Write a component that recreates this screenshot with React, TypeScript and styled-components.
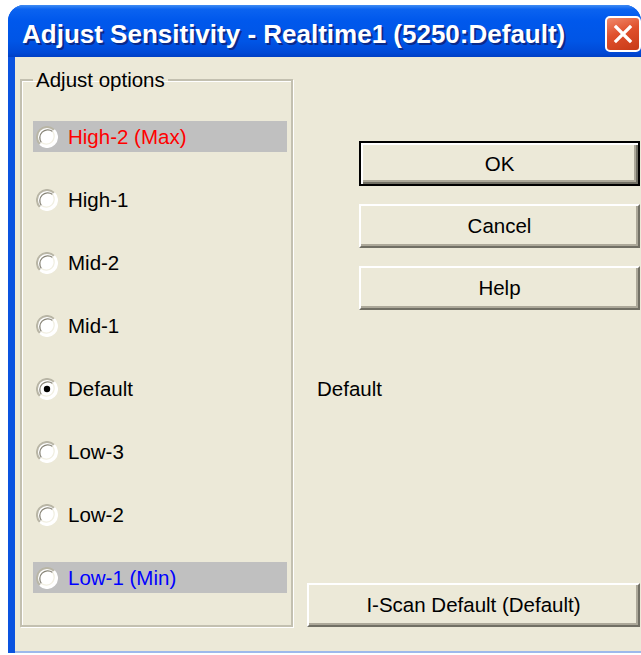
import * as React from 'react'
import styled, { createGlobalStyle } from 'styled-components'

const GlobalStyle = createGlobalStyle`
  html, body {
    margin: 0;
    padding: 0;
    background: #ffffff;
    overflow: hidden;
  }
  body {
    font-family: 'Liberation Sans', Arial, sans-serif;
  }
`

const Window = styled.div`
  margin: 5px 0 0 8px;
  width: 633px;
  border-radius: 16px 16px 0 0;
  background: #0a53e0;
  overflow: hidden;
`

const TitleBar = styled.div`
  height: 52px;
  display: flex;
  align-items: center;
  padding: 6px 0 0 14px;
  box-sizing: border-box;
  background: linear-gradient(
    180deg,
    #3f8cf3 0%,
    #0b63f0 8%,
    #0058ec 30%,
    #0055e6 70%,
    #0049d6 92%,
    #003fc4 100%
  );
`

const Title = styled.div`
  flex: 1;
  color: #ffffff;
  font-size: 26px;
  font-weight: bold;
  text-shadow: 2px 2px 0 #0b2a8a;
  white-space: nowrap;
  overflow: hidden;
`

const CloseButton = styled.div`
  flex: none;
  width: 36px;
  height: 36px;
  box-sizing: border-box;
  border: 2px solid #ffffff;
  border-radius: 5px;
  background: linear-gradient(160deg, #f08a6c 0%, #e0502c 45%, #c73a17 100%);
  display: flex;
  align-items: center;
  justify-content: center;
`

const Body = styled.div`
  margin-left: 7px;
  height: 596px;
  background: #ece9d8;
  display: flex;
  gap: 14px;
  padding: 11px 0 0 5px;
  box-sizing: border-box;
  border-bottom: 2px solid #9db9eb;
`

const GroupBox = styled.fieldset`
  margin: 0;
  width: 273px;
  height: 559px;
  box-sizing: border-box;
  padding: 29px 4px 31px 11px;
  border: 2px solid #c3c0b0;
  box-shadow: inset 1px 1px 0 #ffffff, 1px 1px 0 #ffffff;
  display: flex;
  flex-direction: column;
  gap: 32px;
`

const Legend = styled.legend`
  padding: 0 3px;
  font-size: 20.5px;
  line-height: 24px;
  color: #000000;
`

const OptionRow = styled.div<{ $highlight?: boolean; $color?: string }>`
  height: 31px;
  display: flex;
  align-items: center;
  gap: 10px;
  padding-left: 3px;
  background: ${(p) => (p.$highlight ? '#c0c0c0' : 'transparent')};
  color: ${(p) => p.$color || '#000000'};
  font-size: 20.5px;
`

const RightColumn = styled.div`
  width: 333px;
  height: 559px;
  display: flex;
  flex-direction: column;
  align-items: flex-end;
  padding-top: 73px;
  box-sizing: border-box;
`

const PushButton = styled.div<{ $default?: boolean; $width: number }>`
  width: ${(p) => p.$width}px;
  height: ${(p) => (p.$default ? 45 : 44)}px;
  box-sizing: border-box;
  margin-bottom: 18px;
  display: flex;
  align-items: center;
  justify-content: center;
  font-size: 20.5px;
  color: #000000;
  background: #ece9d8;
  border-top: 2px solid ${(p) => (p.$default ? '#000000' : '#ffffff')};
  border-left: 2px solid ${(p) => (p.$default ? '#000000' : '#ffffff')};
  border-right: 2px solid ${(p) => (p.$default ? '#000000' : '#716f64')};
  border-bottom: 2px solid ${(p) => (p.$default ? '#000000' : '#716f64')};
  box-shadow: ${(p) =>
    p.$default
      ? 'inset 2px 2px 0 #ffffff, inset -2px -2px 0 #716f64, inset -4px -4px 0 #aca899'
      : 'inset -2px -2px 0 #aca899'};

  &:last-child {
    margin-top: auto;
    margin-bottom: 0;
  }
`

const StatusLabel = styled.div`
  align-self: flex-start;
  margin: 49px 0 0 10px;
  font-size: 20.5px;
  line-height: 24px;
  color: #000000;
`

const Radio = ({ checked }: { checked?: boolean }) => (
  <svg width="22" height="22" viewBox="0 0 22 22">
    <circle cx="11" cy="11" r="10" fill="#ffffff" />
    {/* sunken rim: dark upper-left, light lower-right */}
    <path d="M18.1 3.9 A10 10 0 0 0 3.9 18.1" fill="none" stroke="#b9b6a6" strokeWidth="2" />
    <path d="M16.6 5.4 A8 8 0 0 0 5.4 16.6" fill="none" stroke="#8a877a" strokeWidth="1.3" />
    <path d="M3.9 18.1 A10 10 0 0 0 18.1 3.9" fill="none" stroke="#ffffff" strokeWidth="2" />
    <path d="M5.4 16.6 A8 8 0 0 0 16.6 5.4" fill="none" stroke="#f1efe2" strokeWidth="1.3" />
    {checked && <circle cx="11" cy="11" r="3.2" fill="#000000" />}
  </svg>
)

const options = [
  { label: 'High-2 (Max)', color: '#ff0000', highlight: true },
  { label: 'High-1' },
  { label: 'Mid-2' },
  { label: 'Mid-1' },
  { label: 'Default', checked: true },
  { label: 'Low-3' },
  { label: 'Low-2' },
  { label: 'Low-1 (Min)', color: '#0000ff', highlight: true },
] as { label: string; color?: string; highlight?: boolean; checked?: boolean }[]

const App = () => {
  return (
    <>
      <GlobalStyle />
      <Window>
        <TitleBar>
          <Title>Adjust Sensitivity - Realtime1 (5250:Default)</Title>
          <CloseButton>
            <svg width="22" height="22" viewBox="0 0 22 22">
              <path d="M4 4 L18 18 M18 4 L4 18" stroke="#ffffff" strokeWidth="3.2" strokeLinecap="square" />
            </svg>
          </CloseButton>
        </TitleBar>
        <Body>
          <GroupBox>
            <Legend>Adjust options</Legend>
            {options.map((o) => (
              <OptionRow key={o.label} $highlight={o.highlight} $color={o.color}>
                <Radio checked={o.checked} />
                <span>{o.label}</span>
              </OptionRow>
            ))}
          </GroupBox>
          <RightColumn>
            <PushButton $default $width={281}>OK</PushButton>
            <PushButton $width={281}>Cancel</PushButton>
            <PushButton $width={281}>Help</PushButton>
            <StatusLabel>Default</StatusLabel>
            <PushButton $width={333}>I-Scan Default (Default)</PushButton>
          </RightColumn>
        </Body>
      </Window>
    </>
  )
}

export default App
